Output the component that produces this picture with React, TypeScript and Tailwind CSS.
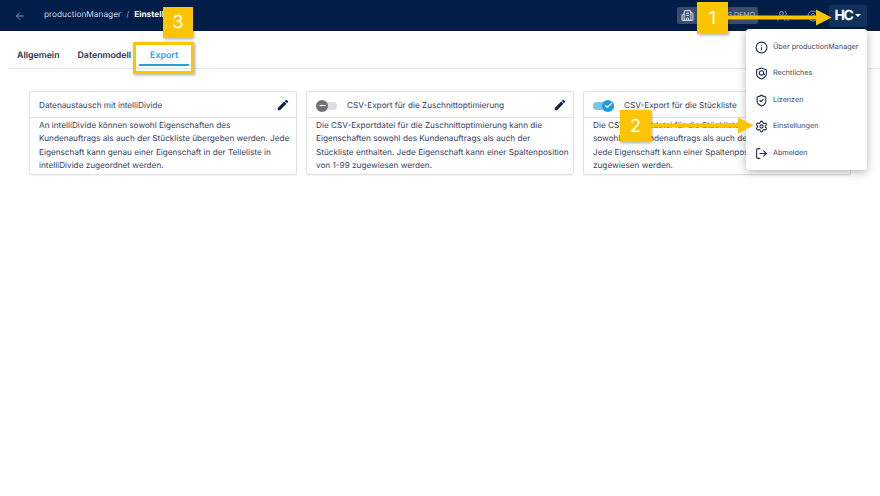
import { ArrowLeft, Building2, Check, CircleHelp, Info, LogOut, Minus, Settings, ShieldCheck, Users } from 'lucide-react';
import { MdEdit } from 'react-icons/md';

const cards = [
  {
    title: 'Datenaustausch mit intelliDivide',
    toggle: null,
    lines: [
      'An intelliDivide können sowohl Eigenschaften des',
      'Kundenauftrags als auch der Stückliste übergeben werden. Jede',
      'Eigenschaft kann genau einer Eigenschaft in der Teileliste in',
      'intelliDivide zugeordnet werden.',
    ],
  },
  {
    title: 'CSV-Export für die Zuschnittoptimierung',
    toggle: 'off',
    lines: [
      'Die CSV-Exportdatei für die Zuschnittoptimierung kann die',
      'Eigenschaften sowohl des Kundenauftrags als auch der',
      'Stückliste enthalten. Jede Eigenschaft kann einer Spaltenposition',
      'von 1-99 zugewiesen werden.',
    ],
  },
  {
    title: 'CSV-Export für die Stückliste',
    toggle: 'on',
    lines: [
      'Die CSV-Exportdatei für die Stückliste kann die Eigenschaften',
      'sowohl des Kundenauftrags als auch der Stückliste enthalten.',
      'Jede Eigenschaft kann einer Spaltenposition von 1-99',
      'zugewiesen werden.',
    ],
  },
];

function ShieldAt({ size, className }: { size: number; className: string }) {
  return (
    <svg width={size} height={size} viewBox="0 0 24 24" fill="none" stroke="currentColor" strokeWidth="2" className={className}>
      <path d="M12 2 L21 5 V12 C21 17 17 20.5 12 22 C7 20.5 3 17 3 12 V5 Z" strokeLinejoin="round" />
      <circle cx="12" cy="11" r="4" />
      <path d="M16 11 V13 C16 14.5 17.5 14.5 18 13" />
    </svg>
  );
}

const menu = [
  { label: 'Über productionManager', icon: Info },
  { label: 'Rechtliches', icon: ShieldAt },
  { label: 'Lizenzen', icon: ShieldCheck },
  { label: 'Einstellungen', icon: Settings },
  { label: 'Abmelden', icon: LogOut },
];

function Toggle({ on }: { on: boolean }) {
  if (on) {
    return (
      <span className="relative block w-[21px] h-[8px] rounded-full bg-[#7cc4ea]">
        <span className="absolute right-0 -top-[2px] w-[12px] h-[12px] rounded-full bg-[#1e9ae0] flex items-center justify-center">
          <Check size={9} strokeWidth={3} className="text-white" />
        </span>
      </span>
    );
  }
  return (
    <span className="relative block w-[21px] h-[8px] rounded-full bg-[#dcdde0]">
      <span className="absolute left-0 -top-[2px] w-[12px] h-[12px] rounded-full bg-[#6f7278] flex items-center justify-center">
        <Minus size={9} strokeWidth={3} className="text-white" />
      </span>
    </span>
  );
}

function Badge({ n, className }: { n: number; className: string }) {
  return (
    <div className={`absolute z-20 flex items-center justify-center bg-[#fdc400] text-white text-[18px] shadow-[1px_1px_3px_rgba(0,0,0,0.35)] ${className}`}>
      {n}
    </div>
  );
}

function Arrow({ className }: { className: string }) {
  return (
    <svg className={`absolute z-20 ${className}`} width="104" height="17" viewBox="0 0 104 17">
      <path d="M0 6.5 H88 V0.5 L103.5 8.5 L88 16.5 V10.5 H0 Z" fill="#fdc400" />
    </svg>
  );
}

export default function App() {
  return (
    <div className="relative w-[880px] h-[496px] overflow-hidden bg-white text-[#33415c] font-['Inter',sans-serif] [text-rendering:geometricPrecision]">
      {/* top bar */}
      <header className="h-[31px] bg-[#001e47] flex items-center pl-[14px] pr-[13px] text-white">
        <ArrowLeft size={12} className="text-[#7f8ca3]" />
        <span className="ml-[18px] text-[8.3px] text-[#d5dae3]">productionManager</span>
        <span className="ml-[5px] text-[8.3px] text-[#9aa5b8]">/</span>
        <span className="ml-[5px] text-[8.3px] font-bold">Einstellungen</span>
        <div className="ml-auto flex items-center">
          <div className="w-[81px] h-[17px] rounded-[2px] bg-[#3a4d6e] flex items-center pl-[4px] pr-[3px] mr-[19px]">
            <Building2 size={13} className="text-[#d5dae3]" />
            <span className="ml-auto text-[7px] text-[#b4bccb]">S DEMO</span>
          </div>
          <Users size={12} className="text-[#8b97ac] mr-[18px]" />
          <CircleHelp size={12} className="text-[#8b97ac] mr-[10px]" />
          <div className="w-[38px] h-[22px] rounded-[2px] bg-[#12305c] flex items-center justify-center gap-[3px]">
            <span className="text-[14px] font-bold tracking-[-1.5px]">HC</span>
            <span className="w-0 h-0 border-x-[3px] border-x-transparent border-t-[3px] border-t-white" />
          </div>
        </div>
      </header>

      {/* tabs */}
      <nav className="ml-[9px] h-[38px] border-b border-[#e1e3e7] flex items-center text-[8.8px] font-semibold pl-[8px] pt-[13px] text-[#28344d]">
        <span>Allgemein</span>
        <span className="ml-[18px]">Datenmodell</span>
        <span className="relative ml-[19px] text-[#2aa0de]">
          Export
          <span className="absolute -left-[11px] -right-[11px] top-[15px] h-[2px] bg-[#2aa0de]" />
        </span>
      </nav>

      {/* cards */}
      <main className="grid grid-cols-[268px_268px_268px] gap-[9px] pl-[29px] pt-[22px]">
        {cards.map((card) => (
          <article key={card.title} className="h-[84px] rounded-[2px] border border-[#dfe1e5] bg-white shadow-[0_1px_1px_rgba(0,0,0,0.04)]">
            <div className="h-[26px] border-b border-[#dfe1e5] flex items-center pl-[9px] pr-[6px] text-[8.2px] pt-[2px]">
              {card.toggle && (
                <span className="mr-[10px]">
                  <Toggle on={card.toggle === 'on'} />
                </span>
              )}
              <span>{card.title}</span>
              <MdEdit size={14} className="ml-auto -mt-[2px] text-[#0f1f3d]" />
            </div>
            <div className="px-[9px] pt-[1px] text-[8.2px] leading-[13.3px] whitespace-nowrap">
              {card.lines.map((line) => (
                <p key={line}>{line}</p>
              ))}
            </div>
          </article>
        ))}
      </main>

      {/* dropdown */}
      <div className="absolute z-10 left-[746px] top-[29px] w-[121px] h-[141px] rounded-[3px] bg-white shadow-[0_2px_8px_rgba(0,0,0,0.3)] pt-[5px] flex flex-col">
        {menu.map((item) => (
          <div key={item.label} className="h-[26.5px] flex items-center pl-[9px] text-[7.2px] text-[#3d4a66] whitespace-nowrap">
            <item.icon size={13} className="text-[#1c2e50] mr-[5px] shrink-0" />
            <span>{item.label}</span>
          </div>
        ))}
      </div>

      {/* annotations */}
      <div className="absolute z-20 left-[133px] top-[42px] w-[61px] h-[32px] border-[3px] border-[#fdc400] shadow-[1px_1px_3px_rgba(0,0,0,0.35)]" />
      <Badge n={3} className="left-[163px] top-[7px] w-[30px] h-[31px]" />
      <Badge n={1} className="left-[697px] top-[2px] w-[31px] h-[32px]" />
      <Badge n={2} className="left-[620px] top-[110px] w-[31px] h-[32px]" />
      <Arrow className="left-[728px] top-[9px]" />
      <Arrow className="left-[650px] top-[117px]" />
    </div>
  );
}
